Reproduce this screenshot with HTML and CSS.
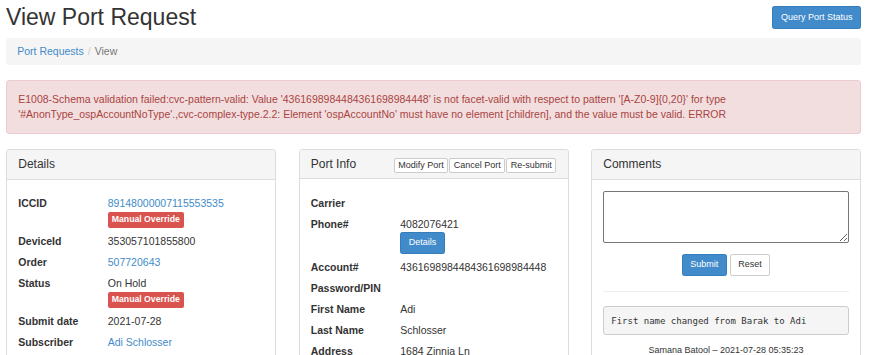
FILE: index.html
```html
<!DOCTYPE html>
<html lang="en">
<head>
    <meta charset="UTF-8">
    <meta name="viewport" content="width=device-width, initial-scale=1.0">
    <title>View Port Request</title>
    <link rel="stylesheet" href="styles.css">
</head>
<body>
    <div class="page">
        <div class="page-header">
            <h1 class="title">View Port Request</h1>
            <button class="btn btn-primary btn-sm">Query Port Status</button>
        </div>

        <ol class="breadcrumb">
            <li><a href="#">Port Requests</a></li>
            <li class="active">View</li>
        </ol>

        <div class="alert">
            E1008-Schema validation failed:cvc-pattern-valid: Value '4361698984484361698984448' is not facet-valid with respect to pattern '[A-Z0-9]{0,20}' for type '#AnonType_ospAccountNoType'.,cvc-complex-type.2.2: Element 'ospAccountNo' must have no element [children], and the value must be valid. ERROR
        </div>

        <div class="columns">
            <!-- Details -->
            <div class="panel">
                <div class="panel-heading">
                    <h3 class="panel-title">Details</h3>
                </div>
                <div class="panel-body">
                    <div class="fields">
                        <div class="field">
                            <div class="field-name">ICCID</div>
                            <div class="field-value">
                                <a href="#">89148000007115553535</a>
                                <span class="tag">Manual Override</span>
                            </div>
                        </div>
                        <div class="field">
                            <div class="field-name">DeviceId</div>
                            <div class="field-value">353057101855800</div>
                        </div>
                        <div class="field">
                            <div class="field-name">Order</div>
                            <div class="field-value"><a href="#">507720643</a></div>
                        </div>
                        <div class="field">
                            <div class="field-name">Status</div>
                            <div class="field-value">
                                On Hold
                                <span class="tag">Manual Override</span>
                            </div>
                        </div>
                        <div class="field">
                            <div class="field-name">Submit date</div>
                            <div class="field-value">2021-07-28</div>
                        </div>
                        <div class="field">
                            <div class="field-name">Subscriber</div>
                            <div class="field-value"><a href="#">Adi Schlosser</a></div>
                        </div>
                    </div>
                </div>
            </div>

            <!-- Port Info -->
            <div class="panel">
                <div class="panel-heading heading-split">
                    <h3 class="panel-title">Port Info</h3>
                    <div class="btn-group">
                        <button class="btn btn-default btn-xs">Modify Port</button>
                        <button class="btn btn-default btn-xs">Cancel Port</button>
                        <button class="btn btn-default btn-xs">Re-submit</button>
                    </div>
                </div>
                <div class="panel-body">
                    <div class="fields">
                        <div class="field">
                            <div class="field-name">Carrier</div>
                            <div class="field-value"></div>
                        </div>
                        <div class="field">
                            <div class="field-name">Phone#</div>
                            <div class="field-value">
                                4082076421
                                <button class="btn btn-primary btn-sm btn-block-start">Details</button>
                            </div>
                        </div>
                        <div class="field">
                            <div class="field-name">Account#</div>
                            <div class="field-value">4361698984484361698984448</div>
                        </div>
                        <div class="field">
                            <div class="field-name">Password/PIN</div>
                            <div class="field-value"></div>
                        </div>
                        <div class="field">
                            <div class="field-name">First Name</div>
                            <div class="field-value">Adi</div>
                        </div>
                        <div class="field">
                            <div class="field-name">Last Name</div>
                            <div class="field-value">Schlosser</div>
                        </div>
                        <div class="field">
                            <div class="field-name">Address</div>
                            <div class="field-value">1684 Zinnia Ln</div>
                        </div>
                    </div>
                </div>
            </div>

            <!-- Comments -->
            <div class="panel">
                <div class="panel-heading">
                    <h3 class="panel-title">Comments</h3>
                </div>
                <div class="panel-body">
                    <form class="comment-form">
                        <textarea class="comment-input"></textarea>
                        <div class="form-actions">
                            <button type="button" class="btn btn-primary btn-sm">Submit</button>
                            <button type="reset" class="btn btn-default btn-sm">Reset</button>
                        </div>
                    </form>
                    <hr class="divider">
                    <pre class="comment">First name changed from Barak to Adi</pre>
                    <div class="comment-meta">Samana Batool &ndash; 2021-07-28 05:35:23</div>
                </div>
            </div>
        </div>
    </div>
</body>
</html>
```

FILE: styles.css
```css
html, body {
    overflow: hidden;
}

body {
    margin: 0;
    font-family: "Liberation Sans", Arial, sans-serif;
    font-size: 10.5px;
    line-height: 15px;
    color: #333;
    background: #fff;
}

a {
    color: #428bca;
    text-decoration: none;
}

.page {
    padding: 0 13px 0 6px;
}

/* header */
.page-header {
    display: flex;
    justify-content: space-between;
    align-items: flex-start;
}

.title {
    margin: 5px 0 8px;
    font-size: 23px;
    font-weight: 500;
    line-height: 1.1;
}

.page-header .btn {
    margin-top: 6px;
}

/* buttons */
.btn {
    display: inline-block;
    font-family: inherit;
    border: 1px solid transparent;
    cursor: pointer;
    white-space: nowrap;
}

.btn-primary {
    background-color: #428bca;
    border-color: #357ebd;
    color: #fff;
}

.btn-default {
    background-color: #fff;
    border-color: #ccc;
    color: #333;
}

.btn-sm {
    padding: 3.5px 7.5px;
    font-size: 9px;
    line-height: 13.5px;
    border-radius: 2.25px;
}

.btn-xs {
    padding: 0.5px 3.5px;
    font-size: 9px;
    line-height: 12px;
    border-radius: 2px;
}

.btn-group {
    display: flex;
    gap: 1px;
}

.btn-block-start {
    display: block;
}

/* breadcrumb */
.breadcrumb {
    list-style: none;
    margin: 0 0 15px;
    padding: 6px 11.25px;
    background: #f5f5f5;
    border-radius: 3px;
    display: flex;
}

.breadcrumb li + li::before {
    content: "/";
    color: #ccc;
    padding: 0 4px;
}

.breadcrumb .active {
    color: #777;
}

/* alert */
.alert {
    margin-bottom: 15px;
    padding: 11px 11.25px;
    border: 1px solid #ebccd1;
    border-radius: 3px;
    background: #f2dede;
    color: #a94442;
}

/* panels */
.columns {
    display: grid;
    grid-template-columns: repeat(3, 1fr);
    gap: 22.5px;
    align-items: start;
}

.panel {
    background: #fff;
    border: 1px solid #ddd;
    border-radius: 3px;
    box-shadow: 0 1px 1px rgba(0, 0, 0, 0.05);
}

.panel-heading {
    padding: 7.5px 11.25px;
    background: #f5f5f5;
    border-bottom: 1px solid #ddd;
    border-radius: 2px 2px 0 0;
}

.heading-split {
    display: flex;
    justify-content: space-between;
    align-items: flex-start;
    height: 13.2px;
}

.panel-title {
    margin: 0;
    font-size: 12px;
    font-weight: 500;
    line-height: 13.2px;
}

.panel-body {
    padding: 11.25px;
}

/* field lists */
.fields {
    margin-top: 5px;
}

.field {
    display: grid;
    grid-template-columns: 89.5px 1fr;
    margin-bottom: 6px;
}

.field-name {
    font-weight: bold;
}

.field-value {
    min-height: 15px;
}

.tag {
    display: table;
    margin-top: 1px;
    padding: 2px 4px 3px;
    font-size: 8.7px;
    font-weight: bold;
    line-height: 11px;
    color: #fff;
    background: #d9534f;
    border-radius: 2px;
}

/* comments */
.comment-input {
    display: block;
    box-sizing: border-box;
    width: 100%;
    height: 52px;
    margin: 0;
    border: 1px solid #767676;
    border-radius: 2px;
    font-family: inherit;
    resize: vertical;
}

.form-actions {
    margin-top: 11px;
    display: flex;
    justify-content: center;
    gap: 3px;
}

.divider {
    margin: 14.5px 0;
    border: 0;
    border-top: 1px solid #eee;
}

.comment {
    margin: 0 0 7.5px;
    padding: 6.5px 7px;
    font-family: "DejaVu Sans Mono", monospace;
    font-size: 9px;
    line-height: 14px;
    color: #333;
    background: #f5f5f5;
    border: 1px solid #ccc;
    border-radius: 3px;
}

.comment-meta {
    text-align: center;
    font-size: 9px;
}
```
